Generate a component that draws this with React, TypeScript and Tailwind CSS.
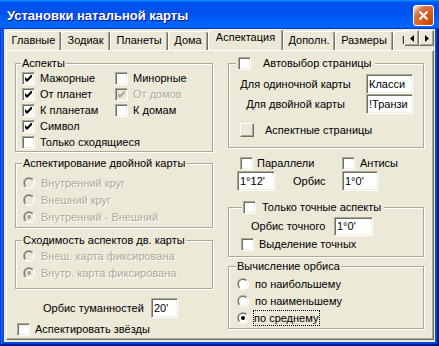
import { ReactNode } from "react";
import { clsx } from "clsx";

const sunken =
  "border border-t-[#ACA899] border-l-[#ACA899] border-r-white border-b-white shadow-[inset_1px_1px_0_#716F64,inset_-1px_-1px_0_#F1EFE2]";
const raised =
  "border border-t-white border-l-white border-r-[#716F64] border-b-[#716F64] shadow-[inset_-1px_-1px_0_#ACA899]";
const etched =
  "relative border border-[#ACA899] shadow-[1px_1px_0_#fff,inset_1px_1px_0_#fff]";
const dim = "text-[#ACA899] [text-shadow:1px_1px_0_#fff]";

const TABS = [
  { label: "Главные", w: "w-[55px]" },
  { label: "Зодиак", w: "w-[49px]" },
  { label: "Планеты", w: "w-[58px]" },
  { label: "Дома", w: "w-[40px]" },
  { label: "Аспектация", w: "w-[75px]", active: true },
  { label: "Дополн.", w: "w-[52px]" },
  { label: "Размеры", w: "w-[58px]" },
  { label: "Прочее", w: "w-[56px]" },
];

function Check({ checked, disabled }: { checked?: boolean; disabled?: boolean }) {
  return (
    <span
      className={clsx(
        "flex size-[13px] shrink-0 items-center justify-center",
        sunken,
        disabled ? "bg-[#ECE9D8]" : "bg-white",
      )}
    >
      {checked && (
        <svg width="7" height="7" viewBox="0 0 7 7">
          <polygon
            points="0,2 2,4 6,0 7,0 7,2 2,7 0,5"
            fill={disabled ? "#ACA899" : "#000"}
          />
        </svg>
      )}
    </span>
  );
}

function Radio({ checked, disabled }: { checked?: boolean; disabled?: boolean }) {
  return (
    <svg width="12" height="12" viewBox="0 0 12 12" className="shrink-0">
      <circle cx="6" cy="6" r="6" fill="url(#radioOuter)" />
      <circle cx="6" cy="6" r="5" fill="url(#radioInner)" />
      <circle cx="6" cy="6" r="4" fill={disabled ? "#ECE9D8" : "#fff"} />
      {checked && (
        <circle cx="6" cy="6" r="2" fill={disabled ? "#ACA899" : "#000"} />
      )}
    </svg>
  );
}

function CheckItem({
  label,
  checked,
  disabled,
}: {
  label: string;
  checked?: boolean;
  disabled?: boolean;
}) {
  return (
    <div className="flex h-[16px] items-center gap-[5px]">
      <Check checked={checked} disabled={disabled} />
      <span className={clsx("whitespace-nowrap", disabled && dim)}>{label}</span>
    </div>
  );
}

function RadioItem({
  label,
  checked,
  disabled,
  focused,
}: {
  label: string;
  checked?: boolean;
  disabled?: boolean;
  focused?: boolean;
}) {
  return (
    <div className={clsx("flex h-[16px] items-center", focused ? "gap-[4px]" : "gap-[6px]")}>
      <Radio checked={checked} disabled={disabled} />
      <span
        className={clsx(
          "whitespace-nowrap",
          disabled && dim,
          focused && "flex h-[16px] items-center border border-dotted border-black pr-[1px]",
        )}
      >
        {label}
      </span>
    </div>
  );
}

function Field({ value, className }: { value: string; className?: string }) {
  return (
    <div
      className={clsx(
        "flex shrink-0 items-center overflow-hidden whitespace-nowrap bg-white pl-[2px]",
        sunken,
        className,
      )}
    >
      {value}
    </div>
  );
}

function Group({
  legend,
  legendClass,
  className,
  children,
}: {
  legend: ReactNode;
  legendClass: string;
  className?: string;
  children: ReactNode;
}) {
  return (
    <div className={clsx(etched, className)}>
      <div
        className={clsx(
          "absolute -top-[8px] flex h-[14px] items-center bg-[#ECE9D8] whitespace-nowrap",
          legendClass,
        )}
      >
        {legend}
      </div>
      {children}
    </div>
  );
}

export default function App() {
  return (
    <div className="h-[346px] w-[439px] [font-family:'Liberation_Sans',Arial,sans-serif] text-[11px] leading-[13px] text-black">
      <svg className="absolute h-0 w-0">
        <defs>
          <linearGradient id="radioOuter" x1="0" y1="0" x2="1" y2="1">
            <stop offset="0.5" stopColor="#ACA899" />
            <stop offset="0.5" stopColor="#ffffff" />
          </linearGradient>
          <linearGradient id="radioInner" x1="0" y1="0" x2="1" y2="1">
            <stop offset="0.5" stopColor="#716F64" />
            <stop offset="0.5" stopColor="#F1EFE2" />
          </linearGradient>
        </defs>
      </svg>

      <div className="flex h-full w-full flex-col bg-[#0055E5] shadow-[inset_-1px_-1px_#00138c,inset_1px_1px_#0831d9,inset_-2px_-2px_#001ea0,inset_2px_2px_#166aee,inset_-3px_-3px_#003bda,inset_3px_3px_#0855dd]">
        {/* title bar */}
        <div className="flex h-[29px] shrink-0 items-center justify-between bg-[linear-gradient(180deg,#0997ff,#0053ee_8%,#0050ee_40%,#0066ff_88%,#0066ff_93%,#005bff_95%,#003dd7_96%,#003dd7)] pl-[7px] pr-[5px] pt-[2px]">
          <span className="text-[13px] font-bold leading-[16px] text-white [text-shadow:1px_1px_0_#0f1089]">
            Установки натальной карты
          </span>
          <div className="flex size-[21px] items-center justify-center rounded-[3px] border border-white bg-[radial-gradient(circle_at_90%_90%,#cc4600_0%,#dc6527_55%,#cd7546_70%,#ffccb2_90%,#fff_100%)]">
            <svg width="11" height="11" viewBox="0 0 11 11">
              <path d="M1.5 1.5L9.5 9.5M9.5 1.5L1.5 9.5" stroke="#fff" strokeWidth="2" />
            </svg>
          </div>
        </div>

        {/* client area */}
        <div className="mx-[4px] mb-[4px] flex flex-1 flex-col bg-[#ECE9D8]">
          <div className="relative ml-[2px] h-[21px] shrink-0">
            <div className="flex h-full w-[398px] items-end overflow-hidden">
              {TABS.map((t) => (
                <div
                  key={t.label}
                  className={clsx(
                    "flex shrink-0 justify-center rounded-t-[3px] border-l border-r border-t border-l-white border-r-[#716F64] border-t-white shadow-[inset_-1px_0_#ACA899] bg-[#ECE9D8] whitespace-nowrap",
                    t.w,
                    t.active
                      ? "relative z-10 -mb-[1px] h-[22px] pt-[1px]"
                      : "h-[19px] pt-[2px]",
                  )}
                >
                  {t.label}
                </div>
              ))}
            </div>
            <div className="absolute left-[398px] top-[1px] flex">
              <div className={clsx("flex h-[16px] w-[15px] items-center justify-center bg-[#ECE9D8]", raised)}>
                <svg width="4" height="7" viewBox="0 0 4 7">
                  <polygon points="4,0 4,7 0,3.5" fill="#000" />
                </svg>
              </div>
              <div className={clsx("flex h-[16px] w-[15px] items-center justify-center bg-[#ECE9D8]", raised)}>
                <svg width="4" height="7" viewBox="0 0 4 7">
                  <polygon points="0,0 0,7 4,3.5" fill="#000" />
                </svg>
              </div>
            </div>
          </div>

          {/* tab page */}
          <div className="ml-[2px] flex h-[290px] w-[428px] gap-[15px] pl-[8px] border border-b-[#716F64] border-l-white border-r-[#716F64] border-t-white shadow-[inset_-1px_-1px_#ACA899]">
            {/* left column */}
            <div className="flex w-[198px] flex-col">
              <Group legend="Аспекты" legendClass="left-[5px] px-[1px]" className="mt-[12px] h-[89px] pl-[6px] pt-[6px]">
                <div className="grid grid-cols-[93px_1fr]">
                  <CheckItem label="Мажорные" checked />
                  <CheckItem label="Минорные" />
                  <CheckItem label="От планет" checked />
                  <CheckItem label="От домов" checked disabled />
                  <CheckItem label="К планетам" checked />
                  <CheckItem label="К домам" />
                  <CheckItem label="Символ" checked />
                  <div />
                  <div className="col-span-2">
                    <CheckItem label="Только сходящиеся" />
                  </div>
                </div>
              </Group>

              <Group
                legend="Аспектирование двойной карты"
                legendClass="left-[6px] px-[1px]"
                className="mt-[11px] flex h-[65px] flex-col gap-[1px] pl-[7px] pt-[11px]"
              >
                <RadioItem label="Внутренний круг" disabled />
                <RadioItem label="Внешний круг" disabled />
                <RadioItem label="Внутренний - Внешний" checked disabled />
              </Group>

              <Group
                legend="Сходимость аспектов дв. карты"
                legendClass="left-[6px] px-[1px]"
                className="mt-[12px] flex h-[49px] flex-col gap-[1px] pl-[7px] pt-[7px]"
              >
                <RadioItem label="Внеш. карта фиксирована" disabled />
                <RadioItem label="Внутр. карта фиксирована" checked disabled />
              </Group>

              <div className="mt-[9px] flex h-[20px] items-center pl-[28px]">
                <span className="w-[108px] whitespace-nowrap">Орбис туманностей</span>
                <Field value="20'" className="h-[20px] w-[27px]" />
              </div>

              <div className="mt-[3px] pl-[2px]">
                <CheckItem label="Аспектировать звёзды" />
              </div>
            </div>

            {/* right column */}
            <div className="flex w-[196px] flex-col">
              <Group
                legend={
                  <>
                    <Check />
                    <span className="ml-[12px]">Автовыбор страницы</span>
                  </>
                }
                legendClass="left-[7px] pl-[2px] pr-[3px]"
                className="mt-[12px] h-[85px] pt-[10px]"
              >
                <div className="grid grid-cols-[137px_47px]">
                  <span className="flex h-[20px] items-center justify-center pr-[4px] whitespace-nowrap">
                    Для одиночной карты
                  </span>
                  <Field value="Класси" className="h-[20px] w-[47px]" />
                  <span className="flex h-[20px] items-center justify-center pr-[4px] whitespace-nowrap">
                    Для двойной карты
                  </span>
                  <Field value="!Транзи" className="h-[20px] w-[47px]" />
                </div>
                <div className="mt-[9px] flex items-center gap-[11px] pl-[11px]">
                  <div className={clsx("size-[14px] bg-[#ECE9D8]", raised)} />
                  <span>Аспектные страницы</span>
                </div>
              </Group>

              <div className="mt-[8px] grid h-[15px] grid-cols-[102px_1fr] items-center pl-[12px]">
                <div className="flex items-center gap-[4px]">
                  <Check />
                  <span>Параллели</span>
                </div>
                <div className="flex items-center gap-[5px]">
                  <Check />
                  <span>Антисы</span>
                </div>
              </div>

              <div className="flex h-[20px] items-center pl-[9px]">
                <Field value="1°12'" className="h-[20px] w-[38px]" />
                <span className="ml-[18px] w-[49px]">Орбис</span>
                <Field value="1°0'" className="h-[20px] w-[36px]" />
              </div>

              <Group
                legend={
                  <>
                    <Check />
                    <span className="ml-[6px]">Только точные аспекты</span>
                  </>
                }
                legendClass="left-[13px] pl-[1px] pr-[3px]"
                className="mt-[16px] h-[50px] pt-[9px]"
              >
                <div className="flex h-[19px] items-center pl-[22px]">
                  <span className="w-[83px] whitespace-nowrap">Орбис точного</span>
                  <Field value="1°0'" className="h-[19px] w-[39px]" />
                </div>
                <div className="pl-[12px]">
                  <CheckItem label="Выделение точных" />
                </div>
              </Group>

              <Group
                legend="Вычисление орбиса"
                legendClass="left-[7px] px-[1px]"
                className="mt-[9px] flex h-[63px] flex-col gap-[1px] pl-[8px] pt-[9px]"
              >
                <RadioItem label="по наибольшему" />
                <RadioItem label="по наименьшему" />
                <RadioItem label="по среднему" checked focused />
              </Group>
            </div>
          </div>
        </div>
      </div>
    </div>
  );
}
